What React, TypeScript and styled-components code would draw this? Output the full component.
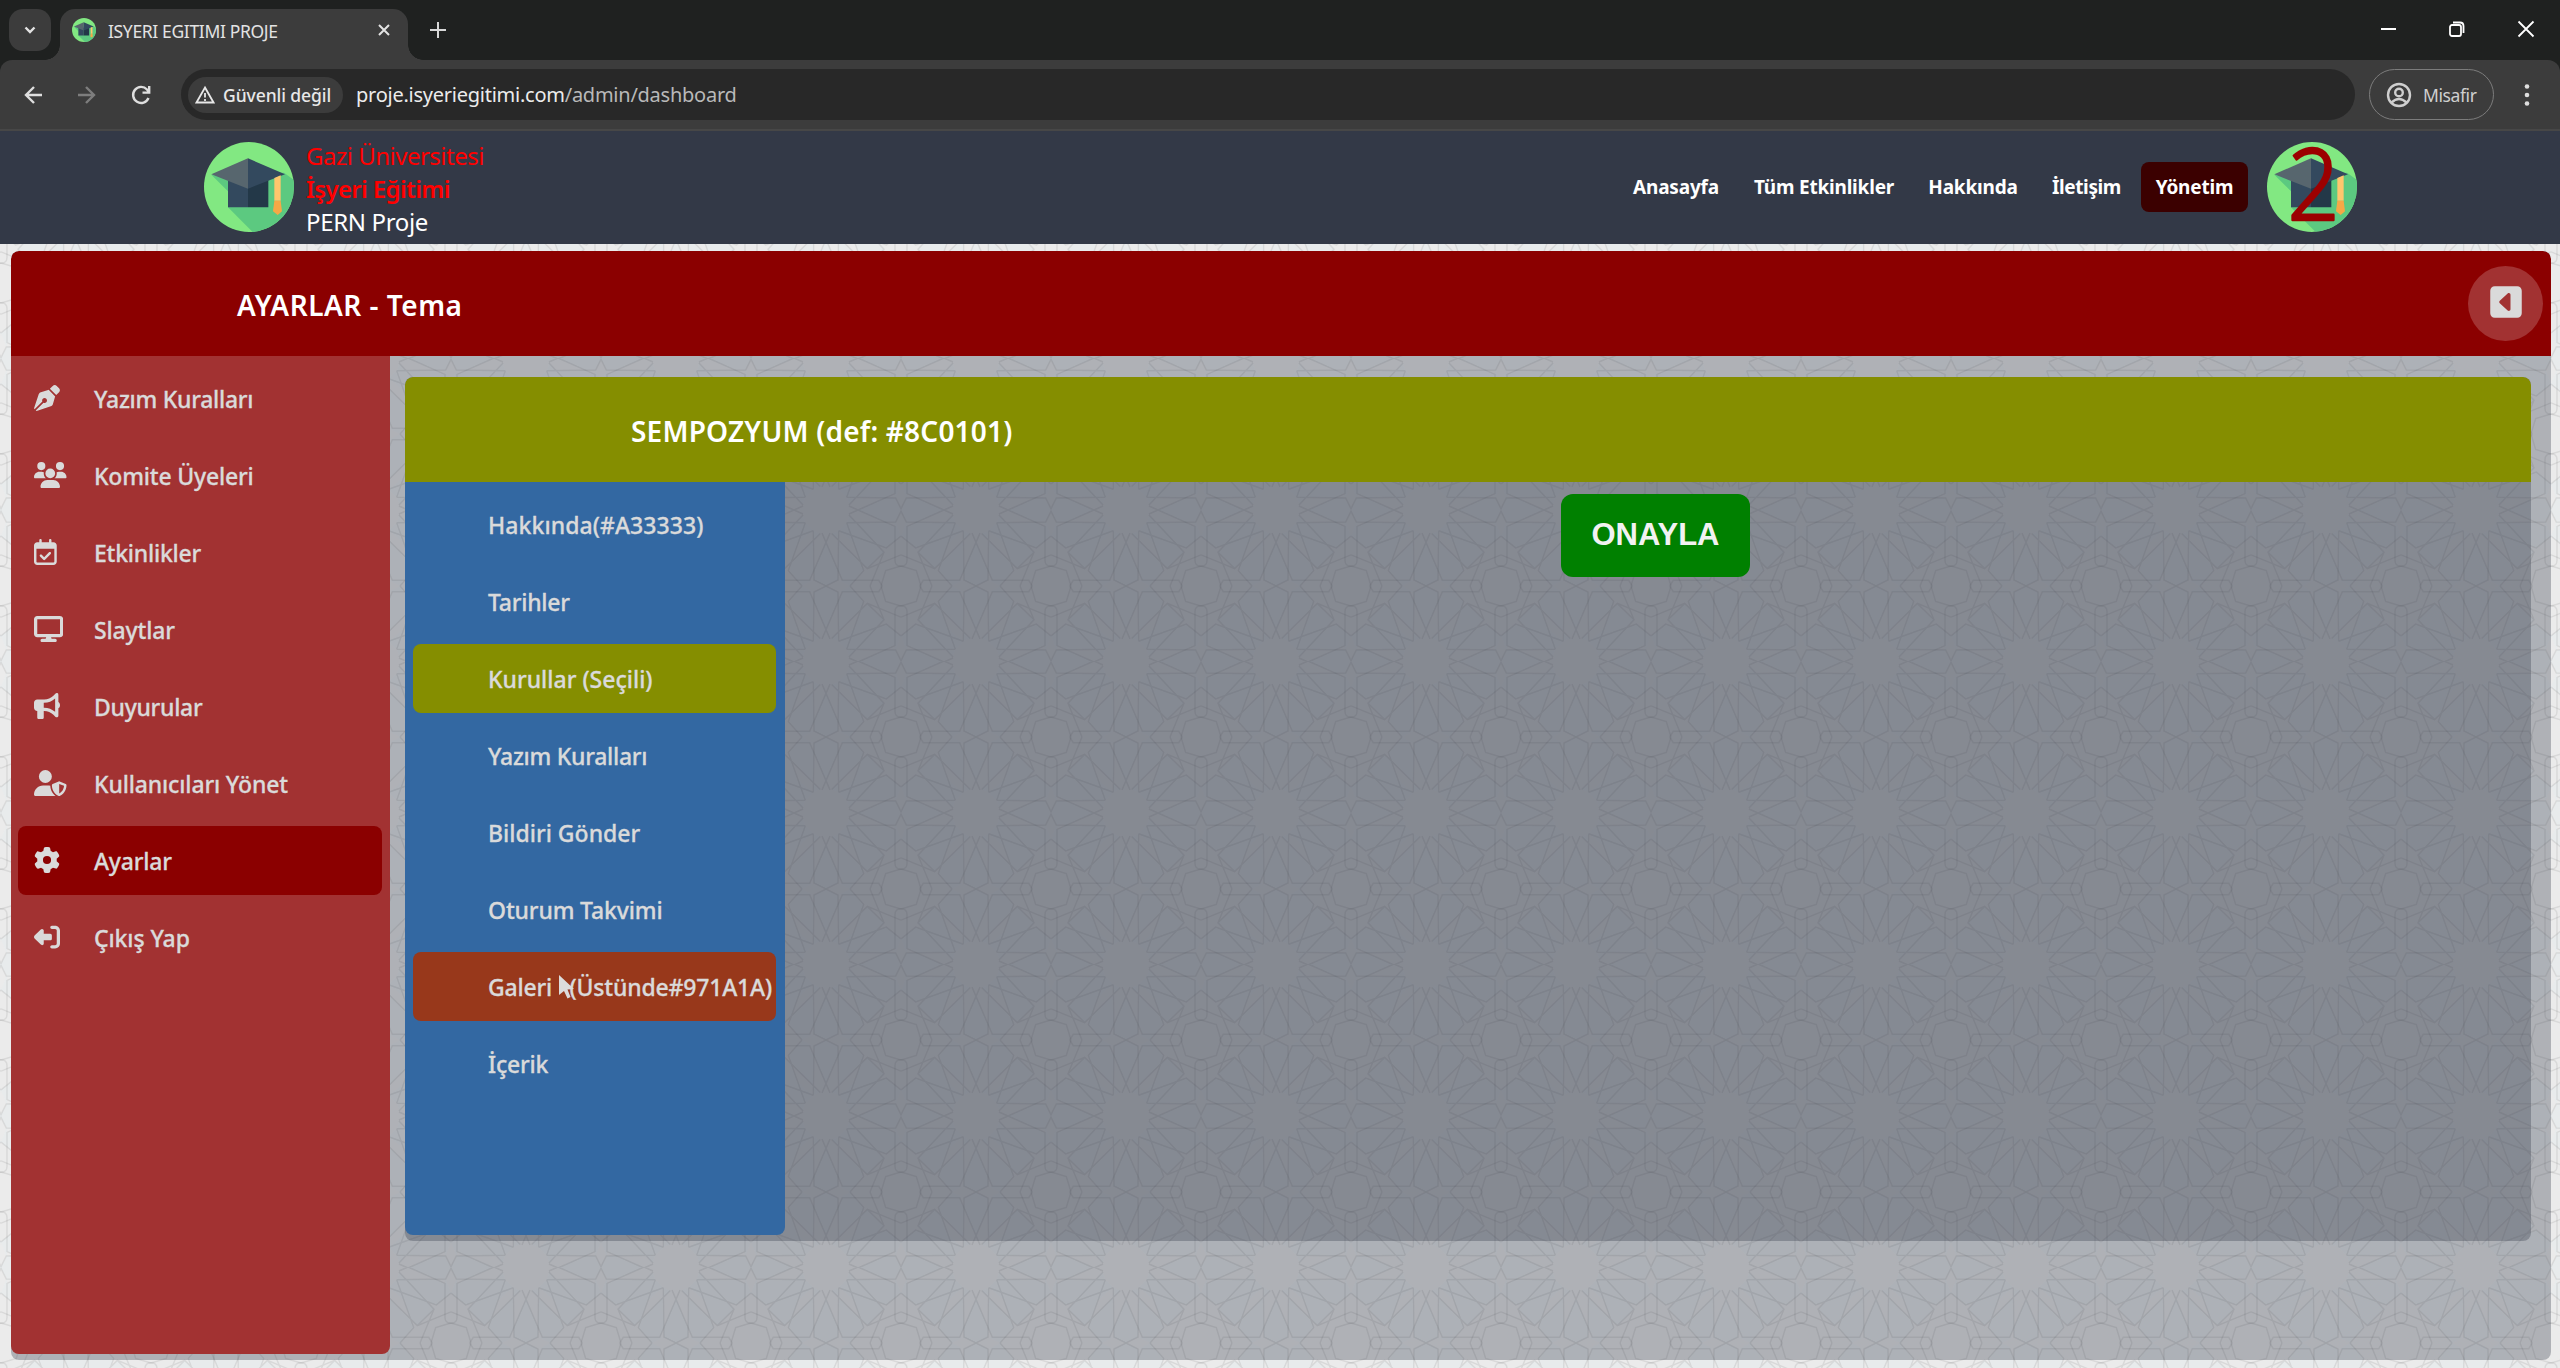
import React from "react";
import styled, { createGlobalStyle } from "styled-components";
import {
  FaPenNib, FaUsers, FaRegCalendarCheck, FaDisplay, FaBullhorn,
  FaUserShield, FaGear, FaRightFromBracket, FaSquareCaretLeft,
} from "react-icons/fa6";

const FONT = `"Noto Sans", "Open Sans", sans-serif`;

/* Girih tile: one sixteen-petal star centred, an octagon on every corner. */
const rails = [
  "M69 12 L207 -49 V-150 Q207 -168 225 -168",
  "M69 -12 L207 49 V150 Q207 168 225 168",
  "M-12 69 L49 210 H158 L169 227",
  "M12 69 L-49 210 H-158 L-169 227",
].join(" ");
const petals =
  "M62 38 L209 36 L227 0 M38 62 L36 209 L0 227 " +
  "M69 15 L174 126 L132 227 M17 70 L124 175 L225 134 " +
  "M174 126 L124 175 M38 62 L181 113 L225 78 M62 38 L113 181 L72 227 " +
  "M225 167 L179 181 L165 227";
const petalFill =
  "M95 0L207 49V36L227 0ZM0 95L49 210H36L0 227ZM70 15L174 126L124 175L17 70L38 62L62 38Z" +
  "M60 38L209 36L225 78L181 113L100 84ZM38 60L36 209L72 227L113 181L84 100Z";
const mirrored = (d: string) =>
  ["1,1", "-1,1", "1,-1", "-1,-1"].map((s) => `<path transform="scale(${s})" d="${d}"/>`).join("");
const tile =
  `<svg xmlns="http://www.w3.org/2000/svg" width="150" height="151.5" viewBox="-225 -227 450 454" preserveAspectRatio="none">` +
  `<g fill="#dcecf2" fill-opacity=".17">${mirrored(petalFill)}</g>` +
  `<g fill="none" stroke="#000" stroke-opacity=".08" stroke-width="4.2">` +
  `<path d="${rails}"/><path transform="scale(-1,-1)" d="${rails}"/>${mirrored(petals)}</g></svg>`;
const patternUrl = `url("data:image/svg+xml,${encodeURIComponent(tile)}")`;

const GlobalStyle = createGlobalStyle`
  *, *::before, *::after { box-sizing: border-box; }
  html, body { margin: 0; height: 100%; overflow: hidden; }
  body { font-family: ${FONT}; background: #ebebeb; }
`;

const Window = styled.div`display: flex; flex-direction: column; width: 2560px; height: 1368px;`;

/* ---------- browser chrome ---------- */
const TabStrip = styled.div`
  display: flex; align-items: flex-start; height: 60px; padding: 9px 0 0 9px; background: #1f2120; flex: none;
`;
const TabSearch = styled.div`
  display: flex; align-items: center; justify-content: center; width: 42px; height: 42px;
  margin-right: 9px; border-radius: 14px; background: #3c3c3c; color: #e3e3e3;
`;
const Tab = styled.div`
  position: relative; display: flex; align-items: center; width: 348px; height: 51px;
  padding: 0 15px 9px 12px; border-radius: 15px 15px 0 0; background: #3c3c3c; color: #e3e3e3;
  &::before, &::after { content: ""; position: absolute; bottom: 0; width: 15px; height: 15px; }
  &::before { left: -15px; background: radial-gradient(circle at 0 0, transparent 14.5px, #3c3c3c 15px); }
  &::after { right: -15px; background: radial-gradient(circle at 100% 0, transparent 14.5px, #3c3c3c 15px); }
`;
const TabTitle = styled.span`
  flex: 1; margin: 1px 0 0 12px; font-size: 17.5px; line-height: 24px; letter-spacing: -0.35px; white-space: nowrap;
`;
const NewTab = styled.div`display: flex; margin: 10px 0 0 19px; color: #d8d8d8;`;
const WindowControls = styled.div`display: flex; gap: 45px; margin: 8px 22px 0 auto; color: #fff;`;
const ToolbarFrame = styled.div`flex: none; background: #1f2120;`;
const Toolbar = styled.div`
  display: flex; align-items: center; height: 71px; padding: 0 20px 0 20px; border-radius: 12px 12px 0 0;
  background: #3c3c3c; border-bottom: 2px solid #474747; color: #dedede;
`;
const ToolbarIcon = styled.div<{ $dim?: boolean; $gap: number }>`
  display: flex; width: 26px; margin-right: ${(p) => p.$gap}px; color: ${(p) => (p.$dim ? "#7d7d7d" : "#dedede")};
`;
const Omnibox = styled.div`
  display: flex; align-items: center; width: 2174px; height: 51px; padding-left: 7px;
  border-radius: 26px; background: #282828;
`;
const SecurityChip = styled.div`
  display: flex; align-items: center; gap: 8px; width: 155px; height: 36px; padding-left: 7px;
  border-radius: 18px; background: #3c3c3c; color: #e8e8e8; white-space: nowrap;
  font-size: 17.5px; font-weight: 500; letter-spacing: -0.08px;
`;
const Url = styled.span`margin-left: 13px; font-size: 20px; letter-spacing: -0.25px; color: #ececec;`;
const UrlPath = styled.span`color: #b9b9b9;`;
const Profile = styled.div`
  display: flex; align-items: center; gap: 11px; width: 125px; height: 51px; margin-left: 14px; padding-left: 16px;
  border: 1.5px solid #7c7c7c; border-radius: 26px; color: #cfcfcf; font-size: 17.5px; letter-spacing: -0.4px;
`;
const Dots = styled.div`display: flex; margin-left: 30px;`;

/* ---------- site header ---------- */
const SiteHeader = styled.header`
  display: flex; align-items: center; height: 113px; flex: none; padding: 0 203px 1px 204px; background: #333947;
`;
const Brand = styled.div`display: flex; flex-direction: column; margin: 3px 0 0 12px;`;
const BrandLine = styled.span<{ $tone: string; $bold?: boolean; $track: number }>`
  font-size: 24px; line-height: 33px; color: ${(p) => p.$tone}; white-space: nowrap;
  font-weight: ${(p) => (p.$bold ? 600 : 400)}; letter-spacing: ${(p) => p.$track}px;
`;
const Nav = styled.nav`display: flex; align-items: center; margin-left: auto; margin-right: 19px;`;
const NavLink = styled.a<{ $width: number; $active?: boolean; $track?: number }>`
  display: flex; align-items: center; justify-content: center; height: 50px; white-space: nowrap;
  width: ${(p) => p.$width}px; border-radius: 8px; font-size: 19px; font-weight: 700;
  letter-spacing: ${(p) => p.$track ?? -0.2}px;
  color: #fff; background: ${(p) => (p.$active ? "#3b0000" : "transparent")};
`;
const Avatar = styled.div`position: relative; display: flex;`;
const AvatarDigit = styled.svg`
  position: absolute; inset: 0; overflow: visible;
  text {
    font-family: ${FONT}; font-size: 99px; font-weight: 300; fill: #9c0000; text-anchor: middle;
    stroke: #9c0000; stroke-width: 2.4px; stroke-linejoin: round;
  }
`;

/* ---------- dashboard ---------- */
const Page = styled.main`
  flex: 1; padding: 7px 9px 8px 11px; background: #ebebeb ${patternUrl} 0.5px 38.75px / 150px 151.5px;
`;
const Panel = styled.section<{ $inner?: boolean }>`
  display: flex; flex-direction: column; height: ${(p) => (p.$inner ? 864 : 1109)}px;
  margin: ${(p) => (p.$inner ? "21px 20px 0 15px" : "0")}; flex: ${(p) => (p.$inner ? 1 : "none")};
  border-radius: 8px; background: rgba(51, 57, 71, 0.32); overflow: hidden;
`;
const PanelHeader = styled.div<{ $tone: string }>`
  display: flex; align-items: center; justify-content: space-between; height: 105px; flex: none;
  padding: 0 8px 0 226px; background: ${(p) => p.$tone}; border-radius: 8px 8px 0 0;
`;
const PanelTitle = styled.h1<{ $track: number }>`
  margin: 3px 0 0; font-size: 28px; font-weight: 600; color: #fff; white-space: nowrap;
  letter-spacing: ${(p) => p.$track}px;
`;
const CollapseButton = styled.button`
  display: flex; align-items: center; justify-content: center; width: 75px; height: 75px; padding: 0 0 3px;
  border: 0; border-radius: 50%; background: #a23232; color: #dadada;
`;
const PanelBody = styled.div`display: flex; flex: 1; align-items: flex-start;`;
const Menu = styled.ul<{ $sub?: boolean }>`
  display: flex; flex-direction: column; gap: 8px; flex: none; list-style: none; margin: 0;
  padding: ${(p) => (p.$sub ? "8px 9px 0 8px" : "8px 8px 0 7px")};
  width: ${(p) => (p.$sub ? 380 : 379)}px; height: ${(p) => (p.$sub ? 753 : 998)}px;
  background: ${(p) => (p.$sub ? "#3368a2" : "#a23232")};
  border-radius: 0 0 8px 8px;
`;
const MenuItem = styled.li<{ $bg?: string; $sub?: boolean }>`
  display: flex; align-items: center; height: 69px; flex: none; border-radius: 8px; white-space: nowrap;
  padding-left: ${(p) => (p.$sub ? 75 : 16)}px; background: ${(p) => p.$bg ?? "transparent"};
  color: #dadada; font-size: 23px; font-weight: 500;
`;
const MenuIcon = styled.span<{ $flip?: boolean; $w: number }>`
  display: flex; width: 60px; margin-top: -2px;
  svg { flex: none; height: 26px; width: ${(p) => p.$w}px; transform: ${(p) => (p.$flip ? "scaleX(-1)" : "none")}; }
`;
const MenuText = styled.span<{ $track: number }>`
  letter-spacing: ${(p) => p.$track}px; white-space: pre; -webkit-text-stroke: 0.3px #dadada;
`;
const Workspace = styled.div`display: flex; flex: 1; justify-content: center; padding: 12px 5px 0 0;`;
const ApproveButton = styled.button`
  width: 189px; height: 83px; padding: 0 0 2px; border: 0; border-radius: 12px; background: #008000; color: #f2f2f2;
  font: bold 31px "Liberation Sans", Arial, sans-serif;
`;
const CursorMark = styled.svg`position: absolute; left: 558px; top: 974px;`;

function CapLogo({ size, id }: { size: number; id: string }) {
  return (
    <svg width={size} height={size} viewBox="0 0 270 270">
      <clipPath id={id}><circle cx="135" cy="135" r="135" /></clipPath>
      <g clipPath={`url(#${id})`}>
        <rect width="270" height="270" fill="#82e882" />
        <path d="M22 98 L72 148 V196 L146 270 H270 V114 L240 92 Z" fill="#5cc980" />
        <path d="M72 110 H132 V196 H72Z" fill="#33495e" />
        <path d="M132 110 H193 V196 H132Z" fill="#233848" />
        <path d="M132 49 L22 97 L132 140Z" fill="#57666e" />
        <path d="M132 49 L243 97 L132 140Z" fill="#33495e" />
        <path d="M211 108 L230 100 V176 H211Z" fill="#ffc66d" />
        <path d="M211 176 H230 L234 208 L221 219 L207 208Z" fill="#f5a846" />
      </g>
    </svg>
  );
}

const sidebar = [
  { text: "Yazım Kuralları", icon: <FaPenNib />, w: 26, track: -0.27 },
  { text: "Komite Üyeleri", icon: <FaUsers />, w: 32.5, track: -0.2 },
  { text: "Etkinlikler", icon: <FaRegCalendarCheck />, w: 22.75, track: -0.23 },
  { text: "Slaytlar", icon: <FaDisplay />, w: 29.25, track: -0.15 },
  { text: "Duyurular", icon: <FaBullhorn />, w: 26, track: -0.3 },
  { text: "Kullanıcıları Yönet", icon: <FaUserShield />, w: 32.5, track: -0.15 },
  { text: "Ayarlar", icon: <FaGear />, w: 26, track: -0.2, bg: "#8b0000" },
  { text: "Çıkış Yap", icon: <FaRightFromBracket />, w: 26, track: -0.1, flip: true },
];
const submenu = [
  { text: "Hakkında(#A33333)", track: 0.08 },
  { text: "Tarihler", track: -0.25 },
  { text: "Kurullar (Seçili)", track: 0 },
  { text: "Yazım Kuralları", track: -0.27 },
  { text: "Bildiri Gönder", track: 0 },
  { text: "Oturum Takvimi", track: -0.15 },
  { text: "Galeri   (Üstünde#971A1A)", track: -0.18 },
  { text: "İçerik", track: -0.2 },
];
const SUBMENU_FILL: Record<number, string> = { 2: "#858e00", 6: "#98381b" };
const nav = [
  { text: "Anasayfa", width: 116 },
  { text: "Tüm Etkinlikler", width: 180 },
  { text: "Hakkında", width: 118 },
  { text: "İletişim", width: 109, track: -0.4 },
  { text: "Yönetim", width: 107, active: true },
];

const line = { fill: "none", stroke: "currentColor", strokeWidth: 2.4 } as const;

export default function App() {
  return (
    <Window>
      <GlobalStyle />
      <TabStrip>
        <TabSearch>
          <svg width="16" height="16" viewBox="0 0 16 16" {...line}><path d="M3.5 5.5 L8 10 L12.5 5.5" /></svg>
        </TabSearch>
        <Tab>
          <CapLogo size={24} id="favicon" />
          <TabTitle>ISYERI EGITIMI PROJE</TabTitle>
          <svg width="18" height="18" viewBox="0 0 18 18" {...line} strokeWidth={2}><path d="M4 4 L14 14 M14 4 L4 14" /></svg>
        </Tab>
        <NewTab><svg width="22" height="22" viewBox="0 0 22 22" {...line} strokeWidth={2}><path d="M11 3 V19 M3 11 H19" /></svg></NewTab>
        <WindowControls>
          <svg width="24" height="24" viewBox="0 0 24 24" {...line} strokeWidth={2}><path d="M5 12 H20" /></svg>
          <svg width="24" height="24" viewBox="0 0 24 24" {...line} strokeWidth={1.8}>
            <rect x="5" y="8" width="11" height="11" rx="2" /><path d="M8 5.5 H15 Q18.5 5.5 18.5 9 V16" />
          </svg>
          <svg width="24" height="24" viewBox="0 0 24 24" {...line} strokeWidth={1.8}><path d="M4.5 4.5 L19.5 19.5 M19.5 4.5 L4.5 19.5" /></svg>
        </WindowControls>
      </TabStrip>
      <ToolbarFrame>
        <Toolbar>
          <ToolbarIcon $gap={27}><svg width="26" height="26" viewBox="0 0 26 26" {...line}><path d="M22 13 H6 M14 5 L6 13 L14 21" /></svg></ToolbarIcon>
          <ToolbarIcon $gap={29} $dim><svg width="26" height="26" viewBox="0 0 26 26" {...line}><path d="M5 13 H21 M13 5 L21 13 L13 21" /></svg></ToolbarIcon>
          <ToolbarIcon $gap={27}><svg width="26" height="26" viewBox="0 0 26 26" {...line}><path d="M20.5 16 A8 8 0 1 1 19 7.5 L21 10 M21.2 4 V10.6 H14.5" /></svg></ToolbarIcon>
          <Omnibox>
            <SecurityChip>
              <svg width="20" height="20" viewBox="0 0 20 20" {...line} strokeWidth={1.8}><path d="M10 2.5 L18.5 17.5 H1.5Z M10 8 V12.5 M10 14 V16" /></svg>
              <span>Güvenli değil</span>
            </SecurityChip>
            <Url>proje.isyeriegitimi.com<UrlPath>/admin/dashboard</UrlPath></Url>
          </Omnibox>
          <Profile>
            <svg width="26" height="26" viewBox="0 0 26 26" {...line}><circle cx="13" cy="13" r="11" /><circle cx="13" cy="10.5" r="3.8" /><path d="M5.5 20.5 Q13 13.5 20.5 20.5" /></svg>
            <span>Misafir</span>
          </Profile>
          <Dots><svg width="6" height="24" viewBox="0 0 6 24" fill="currentColor"><circle cx="3" cy="3.5" r="2.3" /><circle cx="3" cy="12" r="2.3" /><circle cx="3" cy="20.5" r="2.3" /></svg></Dots>
        </Toolbar>
      </ToolbarFrame>
      <SiteHeader>
        <CapLogo size={90} id="brand" />
        <Brand>
          <BrandLine $tone="#ff0000" $track={-0.5}>Gazi Üniversitesi</BrandLine>
          <BrandLine $tone="#ff0000" $bold $track={-0.65}>İşyeri Eğitimi</BrandLine>
          <BrandLine $tone="#ffffff" $track={-0.35}>PERN Proje</BrandLine>
        </Brand>
        <Nav>
          {nav.map((n) => (
            <NavLink key={n.text} $width={n.width} $active={n.active} $track={n.track}>{n.text}</NavLink>
          ))}
        </Nav>
        <Avatar>
          <CapLogo size={90} id="avatar" />
          <AvatarDigit width="90" height="90" viewBox="0 0 90 90"><text transform="translate(46.5 78) scale(0.92 1)">2</text></AvatarDigit>
        </Avatar>
      </SiteHeader>
      <Page>
        <Panel>
          <PanelHeader $tone="#8b0000">
            <PanelTitle $track={0.5}>AYARLAR - Tema</PanelTitle>
            <CollapseButton><FaSquareCaretLeft size={36} /></CollapseButton>
          </PanelHeader>
          <PanelBody>
            <Menu>
              {sidebar.map((m) => (
                <MenuItem key={m.text} $bg={m.bg}>
                  <MenuIcon $flip={m.flip} $w={m.w}>{m.icon}</MenuIcon>
                  <MenuText $track={m.track}>{m.text}</MenuText>
                </MenuItem>
              ))}
            </Menu>
            <Panel $inner>
              <PanelHeader $tone="#858e00">
                <PanelTitle $track={0.2}>SEMPOZYUM (def: #8C0101)</PanelTitle>
              </PanelHeader>
              <PanelBody>
                <Menu $sub>
                  {submenu.map((m, i) => (
                    <MenuItem key={m.text} $bg={SUBMENU_FILL[i]} $sub>
                      <MenuText $track={m.track}>{m.text}</MenuText>
                    </MenuItem>
                  ))}
                </Menu>
                <Workspace><ApproveButton>ONAYLA</ApproveButton></Workspace>
              </PanelBody>
            </Panel>
          </PanelBody>
        </Panel>
      </Page>
      <CursorMark width="18" height="26" viewBox="0 0 18 26"><path d="M1 1 V21 L6 17 L9.5 24.5 L12.5 23 L9.5 15.5 L16 15Z" fill="#dcdcdc" /></CursorMark>
    </Window>
  );
}
